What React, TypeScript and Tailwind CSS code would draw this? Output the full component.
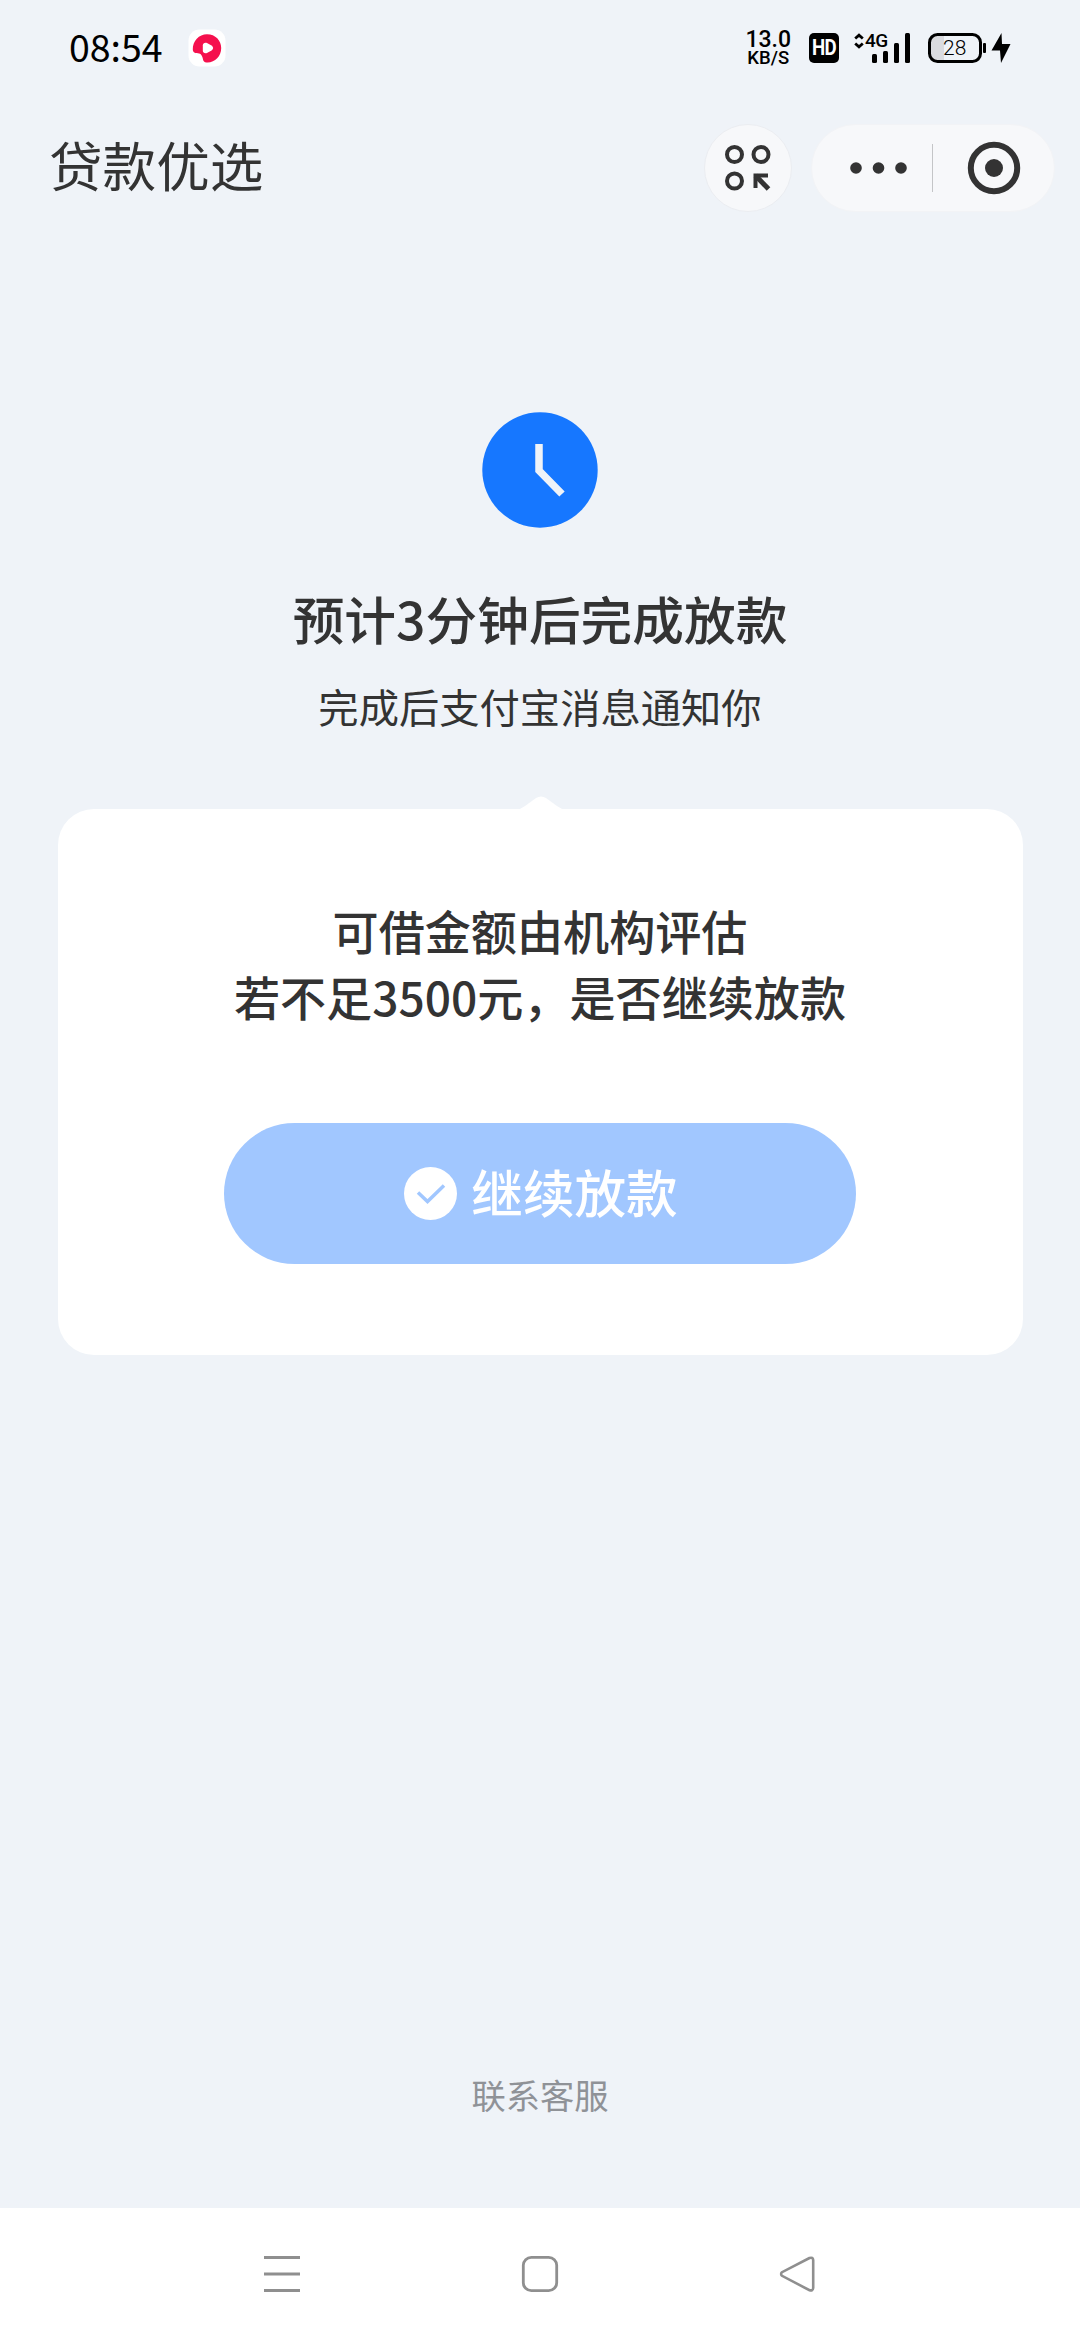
import React from 'react';

function RecorderIcon() {
  return (
    <svg width="38" height="38" viewBox="0 0 38 38" className="ml-[25px]">
      <rect x="0.5" y="0.5" width="37" height="37" rx="11" fill="#fff" />
      <path
        d="M19 5.2C27.5 5.2 33.2 11.5 33.2 19C33.2 27.5 26.5 34 18.5 33.4C16.2 33.2 15.5 32.5 15 30.5C14.5 28 14 26.5 12.5 25C11 23.8 8.5 24.8 6.8 23.8C5.5 23 4.8 22.2 4.8 20.5C4.6 12 11 5.2 19 5.2Z"
        fill="#f5104d"
      />
      <path
        d="M14.8 16.5C14.8 14 17 13.2 19 14L23.5 16.5C25.7 18 25.7 20 23.5 21.5L19 24C17 24.8 14.8 24 14.8 21.5Z"
        fill="#fff"
      />
    </svg>
  );
}

function SignalIcon() {
  return (
    <div className="relative ml-[14px] h-[30px] w-[57px]">
      <svg width="57" height="30" viewBox="0 0 57 30" fill="#000">
        <path d="M2.2 5.5L6 2.2L9.8 5.5M2.2 10.5L6 13.8L9.8 10.5" fill="none" stroke="#000" strokeWidth="2.8" />
        <rect x="19" y="21" width="5" height="9" rx="1.5" />
        <rect x="30" y="18" width="5" height="12" rx="1.5" />
        <rect x="41" y="10" width="5" height="20" rx="1.5" />
        <rect x="52" y="0" width="5" height="30" rx="1.5" />
      </svg>
      <span className="absolute left-[12px] top-[-2px] text-[19px] font-medium leading-[20px] tracking-[-0.5px]">4G</span>
    </div>
  );
}

function BatteryIcon() {
  return (
    <div className="relative ml-[18px] h-[30px] w-[58px]">
      <svg width="58" height="30" viewBox="0 0 58 30">
        <path d="M9 2H16V28H9Q2 28 2 21V9Q2 2 9 2Z" fill="#dadbdf" />
        <rect x="1.5" y="1.5" width="51" height="27" rx="8" fill="none" stroke="#000" strokeWidth="3" />
        <rect x="55" y="10" width="3" height="10" rx="1" fill="#000" />
      </svg>
      <span className="absolute left-[15px] top-[4px] text-[21px] font-light leading-[22px]">28</span>
    </div>
  );
}

function StatusBar() {
  return (
    <div className="flex h-[96px] items-center pl-[69px] pr-[69px] text-black">
      <span className="-mt-[5px] text-[37.5px] leading-none">08:54</span>
      <RecorderIcon />
      <div className="ml-auto flex items-center font-[Roboto,sans-serif]">
        <div className="flex flex-col items-center gap-[3px] font-medium">
          <span className="text-[23px] leading-[17px]">13.0</span>
          <span className="text-[18.5px] leading-[14px]">KB/S</span>
        </div>
        <div className="ml-[18px] flex h-[30px] w-[30px] items-center justify-center rounded-[5px] bg-black text-[22px] font-bold leading-none tracking-[-1px] text-white">
          <span className="scale-x-[0.85]">HD</span>
        </div>
        <SignalIcon />
        <BatteryIcon />
        <svg width="20" height="30" viewBox="0 0 20 30" className="ml-[5px]">
          <path d="M10.5 0L0.5 17.5H9L10 30L19.5 11H11Z" fill="#000" />
        </svg>
      </div>
    </div>
  );
}

function Header() {
  return (
    <header className="flex h-[143px] items-center pl-[49px] pr-[25px]">
      <h1 className="-mt-[8px] text-[53.6px] leading-none">贷款优选</h1>
      <button className="ml-auto flex h-[88px] w-[88px] items-center justify-center rounded-full border border-[#ebedf1] bg-[#f7f8fa]">
        <svg width="46" height="46" viewBox="0 0 46 46" fill="none" stroke="#333" strokeWidth="4">
          <circle cx="9.5" cy="9.5" r="7.5" />
          <circle cx="36" cy="9.5" r="7.5" />
          <circle cx="9.5" cy="36" r="7.5" />
          <path d="M43 30.5H30.5V43" />
          <path d="M30.5 30.5L43.5 44" strokeWidth="5" />
        </svg>
      </button>
      <div className="ml-[19px] flex h-[88px] w-[244px] items-center rounded-full border border-[#f2f3f6] bg-[#f7f8fa]">
        <svg width="58" height="12" viewBox="0 0 58 12" fill="#333" className="ml-[38px]">
          <circle cx="6" cy="6" r="5.8" />
          <circle cx="28.5" cy="6" r="5.8" />
          <circle cx="51" cy="6" r="5.8" />
        </svg>
        <div className="ml-[24px] h-[48px] w-px bg-[#c4c5c7]" />
        <svg width="54" height="54" viewBox="0 0 54 54" className="ml-[34px]">
          <circle cx="27" cy="27" r="23.2" fill="none" stroke="#333" strokeWidth="6" />
          <circle cx="27" cy="27" r="9" fill="#333" />
        </svg>
      </div>
    </header>
  );
}

function NavBar() {
  return (
    <nav className="flex h-[132px] items-center justify-between bg-white px-[263px]">
      <svg width="38" height="38" viewBox="0 0 38 38" stroke="#8f8f8f" strokeWidth="3">
        <path d="M1 2.5H37M1 19H37M1 35.5H37" />
      </svg>
      <svg width="38" height="38" viewBox="0 0 38 38" fill="none" stroke="#8f8f8f" strokeWidth="2.8">
        <rect x="2.3" y="2.3" width="33.4" height="33.4" rx="8" />
      </svg>
      <svg width="38" height="38" viewBox="0 0 38 38" fill="none" stroke="#8f8f8f" strokeWidth="2.6">
        <path d="M30.5 3L3 17.2Q1.2 19 3 20.8L30.5 35.2Q34 36 34.2 33V5Q34 2 30.5 3Z" />
      </svg>
    </nav>
  );
}

export default function App() {
  return (
    <div className="flex h-[2340px] w-[1080px] flex-col overflow-hidden bg-[#eff3f8] font-['Noto_Sans_CJK_SC',sans-serif] text-[#333]">
      <StatusBar />
      <Header />

      <main className="flex flex-1 flex-col items-center pt-[173px]">
        <svg width="116" height="116" viewBox="0 0 116 116">
          <circle cx="58" cy="58" r="57.7" fill="#1677ff" />
          <path d="M57 32V58.5L80 82" fill="none" stroke="#eff3f8" strokeWidth="7.5" />
        </svg>
        <h2 className="mt-[58px] text-[51.7px] font-medium leading-[64px]">预计3分钟后完成放款</h2>
        <p className="mt-[31px] text-[40.3px] leading-[50px]">完成后支付宝消息通知你</p>

        {/* Card with a small pointer on the top edge */}
        <section className="relative mt-[78px] flex h-[546px] w-[965px] flex-col items-center rounded-[36px] bg-white pt-[89px]">
          <svg width="50" height="14" viewBox="0 0 50 14" className="absolute left-[458px] top-[-13px]">
            <path d="M0 14Q5 13 9 10L20 2Q25 -1 30 2L41 10Q45 13 50 14Z" fill="#fff" />
          </svg>
          <div className="text-center text-[46.1px] font-medium leading-[65.5px]">
            <p>可借金额由机构评估</p>
            <p>若不足3500元，是否继续放款</p>
          </div>
          <button className="mt-[94px] flex h-[141px] w-[632px] items-center justify-center rounded-full bg-[#a1c7ff] pl-[2px] text-white">
            <svg width="53" height="53" viewBox="0 0 53 53">
              <circle cx="26.5" cy="26.5" r="26.5" fill="#fff" />
              <path d="M14 25.5L23.5 34.5L40 18.5" fill="none" stroke="#a1c7ff" strokeWidth="3.5" />
            </svg>
            <span className="-mt-[6px] ml-[14px] text-[51.6px] font-medium leading-none">继续放款</span>
          </button>
        </section>

        <a className="mb-[88px] mt-auto text-[34.3px] leading-[52px] text-[#8f9297]">联系客服</a>
      </main>

      <NavBar />
    </div>
  );
}
